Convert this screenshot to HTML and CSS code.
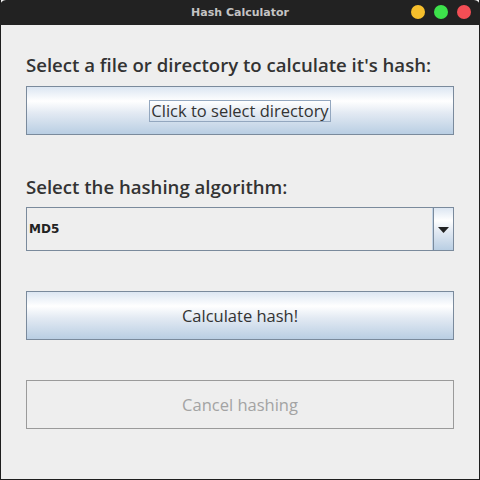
FILE: index.html
```html
<!DOCTYPE html>
<html>
<head>
<meta charset="utf-8">
<title>Hash Calculator</title>
<link rel="stylesheet" href="styles.css">
</head>
<body>
<div class="window">
  <div class="titlebar">
    <span class="title">Hash Calculator</span>
    <div class="controls">
      <span class="dot dot-min"></span>
      <span class="dot dot-max"></span>
      <span class="dot dot-close"></span>
    </div>
  </div>
  <div class="content">
    <div class="label label-first">Select a file or directory to calculate it's hash:</div>
    <button class="btn"><span class="focus">Click to select directory</span></button>
    <div class="label label-second">Select the hashing algorithm:</div>
    <div class="combo">
      <div class="combo-field">MD5</div>
      <div class="combo-arrow">
        <svg width="11" height="6" viewBox="0 0 11 6"><polygon points="0,0 11,0 5.5,6" fill="#222"/></svg>
      </div>
    </div>
    <button class="btn btn-calc">Calculate hash!</button>
    <button class="btn btn-cancel" disabled>Cancel hashing</button>
  </div>
</div>
</body>
</html>
```
FILE: styles.css
```css
html, body {
  margin: 0;
  padding: 0;
  background: #222;
}
.window {
  width: 480px;
  height: 480px;
  box-sizing: border-box;
  border: 1px solid #1e1e1e;
  border-top: none;
  background: #eeeeee;
  display: flex;
  flex-direction: column;
}
.titlebar {
  height: 25px;
  margin: 0 -1px;
  background: #222222;
  border-radius: 6px 6px 0 0;
  position: relative;
  display: flex;
  align-items: center;
  justify-content: center;
}
.title {
  font-family: "DejaVu Sans", sans-serif;
  font-weight: bold;
  font-size: 11px;
  color: #c4c4c4;
}
.controls {
  position: absolute;
  right: 9px;
  top: 5px;
  display: flex;
  gap: 9px;
}
.dot {
  width: 14px;
  height: 14px;
  border-radius: 50%;
  display: block;
}
.dot-min { background: #f6bf2c; }
.dot-max { background: #3de24b; }
.dot-close { background: #f34e55; }
.content {
  padding: 29px 25px 0 25px;
  display: flex;
  flex-direction: column;
}
.label {
  font-family: "Open Sans", sans-serif;
  font-size: 18.6px;
  line-height: 22px;
  color: #333;
  font-weight: 600;
}
.label-first { margin-bottom: 10px; }
.label-second { margin-top: 41px; margin-bottom: 9px; }
.btn {
  height: 49px;
  border: 1px solid #7a8a9c;
  background: linear-gradient(#dce6f2 0%, #ffffff 30%, #e3eaf3 55%, #b9cee3 100%);
  font-family: "Open Sans", sans-serif;
  font-size: 16.5px;
  color: #333;
  padding: 0;
  margin: 0;
  display: flex;
  align-items: center;
  justify-content: center;
}
.focus {
  border: 1px solid #93a7bf;
  padding: 0 1px;
  line-height: 20px;
}
.btn-calc { margin-top: 40px; }
.btn-cancel {
  margin-top: 40px;
  background: #eeeeee;
  border-color: #9a9a9a;
  color: #a3a3a3;
}
.combo {
  height: 44px;
  display: flex;
  border: 1px solid #7a8a9c;
  box-sizing: border-box;
}
.combo-field {
  flex: 1;
  background: #eeeeee;
  border-right: 1px solid #c3d4e6;
  font-family: "DejaVu Sans", sans-serif;
  font-weight: bold;
  font-size: 12px;
  color: #222;
  display: flex;
  align-items: center;
  padding-left: 2px;
}
.combo-arrow {
  width: 19px;
  border-left: 1px solid #7a8a9c;
  background: linear-gradient(#dce6f2 0%, #ffffff 30%, #e3eaf3 55%, #b9cee3 100%);
  display: flex;
  align-items: center;
  justify-content: center;
}
.combo-arrow svg { display: block; margin-top: 1px; }
```
